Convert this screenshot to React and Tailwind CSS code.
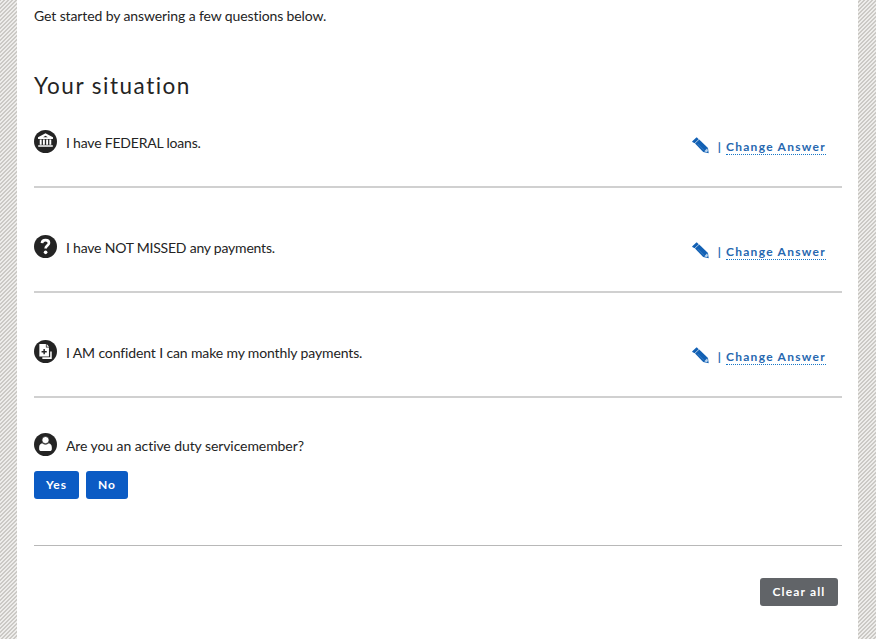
import React from "react";

const BankIcon = () => (
  <svg viewBox="0 0 24 24" className="size-[23px] shrink-0">
    <circle cx="12" cy="12" r="12" fill="#242424" />
    <path d="M12 3.4 4.2 7.6v1.9h15.6V7.6Z" fill="#fff" />
    <path d="M12 6 9.6 7.5h4.8Z" fill="#242424" />
    <path d="M6 9.9h2v5.6H6zM9.3 9.9h2v5.6h-2zM12.7 9.9h2v5.6h-2zM16 9.9h2v5.6h-2zM4.4 15.8h15.2v1.8H4.4z" fill="#fff" />
  </svg>
);

const QuestionIcon = () => (
  <svg viewBox="0 0 24 24" className="size-[23px] shrink-0">
    <circle cx="12" cy="12" r="12" fill="#242424" />
    <path d="M8.3 8.4C8.5 6.3 10 5.3 12 5.3c2.2 0 3.6 1.2 3.6 3 0 2.6-3.5 2.9-3.5 5.9" fill="none" stroke="#fff" strokeWidth="2.8" />
    <circle cx="12.1" cy="18.1" r="1.9" fill="#fff" />
  </svg>
);

const DocumentIcon = () => (
  <svg viewBox="0 0 24 24" className="size-[23px] shrink-0">
    <circle cx="12" cy="12" r="12" fill="#242424" />
    <path d="M5.6 4.3h6.8v3.6h3.2v9.4h-10Z" fill="#fff" />
    <path d="m13.2 4.3 2.6 2.8h-2.6Z" fill="#fff" />
    <path d="M17.7 12v6.9H8.7" fill="none" stroke="#fff" strokeWidth="1.6" />
    <path d="M10.6 9.5v5.4M7.9 12.2h5.4" fill="none" stroke="#242424" strokeWidth="1.5" />
  </svg>
);

const PersonIcon = () => (
  <svg viewBox="0 0 24 24" className="size-[23px] shrink-0">
    <circle cx="12" cy="12" r="12" fill="#242424" />
    <path d="M8.6 10.700c1.800 1.900 5 1.900 6.800 0 2.100.5 3.200 2 3.200 4.300v1.600c0 1.500-.8 2.200-2.200 2.200H7.600c-1.400 0-2.200-.7-2.200-2.200V15c0-2.300 1.100-3.800 3.200-4.300Z" fill="#fff" />
    <circle cx="12" cy="7.4" r="3.8" fill="#fff" stroke="#242424" strokeWidth=".8" />
  </svg>
);

const PencilIcon = () => (
  <svg viewBox="0 0 18 18" className="h-[18px] w-[18px]" fill="#1260b4">
    <path d="M.3 4.3 3.8.9c.5-.5 1.1-.5 1.6 0l1.4 1.3-4.2 4L.3 4.9c-.2-.2-.2-.4 0-.6Z" />
    <path d="m3 6.6 4.200-4.100 8.800 8.500.7 5.300-5.500-1.300Z" />
    <path d="m12.300 14.200 2.900-2.900.8 2.800-1.400 1.200Z" fill="#b9d4ee" />
    <path d="m5.600 6.900 6.300 6.300" stroke="#5f97d0" strokeWidth=".5" />
  </svg>
);

const answers = [
  { icon: BankIcon, text: "I have FEDERAL loans.", tracking: "tracking-[-0.2px]" },
  { icon: QuestionIcon, text: "I have NOT MISSED any payments.", tracking: "tracking-[-0.21px]" },
  { icon: DocumentIcon, text: "I AM confident I can make my monthly payments.", tracking: "tracking-[-0.13px]" },
];

function AnswerRow({ icon: Icon, text, tracking }) {
  return (
    <div className="flex h-[105px] items-start justify-between border-b-2 border-[#d0d0d0] pt-[47px]">
      <div className="flex items-center gap-[9px]">
        <Icon />
        <span className={`pt-[2px] text-[14px] leading-5 whitespace-nowrap ${tracking}`}>{text}</span>
      </div>
      <div className="mr-4 flex items-start pt-[7px] text-[#2768b0]">
        <PencilIcon />
        <span className="ml-[8px] pt-[2px] text-[12px] leading-4 font-bold">|</span>
        <a className="ml-[5px] mt-[2px] h-[16px] border-b border-dotted border-[#1676c8] text-[12px] leading-[15px] font-bold tracking-[1.27px] whitespace-nowrap">
          Change Answer
        </a>
      </div>
    </div>
  );
}

export default function App() {
  return (
    <div className="h-[639px] overflow-hidden bg-[repeating-linear-gradient(135deg,#cbc9c5_0px,#cbc9c5_0.9px,#eeedeb_1.3px,#eeedeb_2.4px,#cbc9c5_2.828px)] pr-[18px] pl-[17px] font-['Lato',sans-serif] text-[#242424]">
      <main className="h-full bg-white pr-[16px] pl-[17px]">
        <p className="pt-[6px] text-[14px] leading-5 tracking-[-0.11px]">Get started by answering a few questions below.</p>
        <h1 className="mt-[44px] h-[13px] text-[22.5px] leading-[32px] tracking-[1.5px]">Your situation</h1>
        {answers.map((answer) => (
          <AnswerRow key={answer.text} {...answer} />
        ))}
        <section className="h-[148px] border-b border-[#b8b8b8] pt-[35px]">
          <div className="flex items-center gap-[9px]">
            <PersonIcon />
            <span className="pt-[3px] text-[14px] leading-5 tracking-[-0.08px]">Are you an active duty servicemember?</span>
          </div>
          <div className="mt-[15px] flex gap-[7px] text-[12px] font-bold tracking-[1px] text-white">
            <button className="h-[28px] w-[45px] rounded-[3px] bg-[#0b5bc4] pb-px">Yes</button>
            <button className="h-[28px] w-[42px] rounded-[3px] bg-[#0b5bc4] pb-px">No</button>
          </div>
        </section>
        <div className="flex justify-end pt-8 pr-[4px]">
          <button className="h-[28px] w-[78px] rounded-[3px] bg-[#616468] pb-px text-[12px] font-bold tracking-[1.15px] text-white">Clear all</button>
        </div>
      </main>
    </div>
  );
}
